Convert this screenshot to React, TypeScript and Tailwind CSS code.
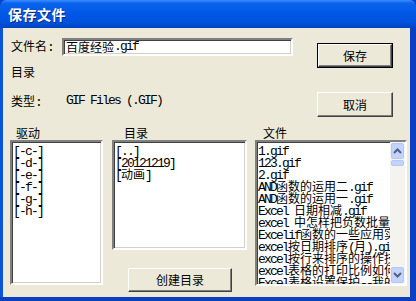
// 保存文件 dialog, Windows XP style
const CJK = "font-['Noto_Sans_CJK_SC',sans-serif]";

function Mixed({ text }: { text: string }) {
  const parts = text.split(/([\x20-\x7e]+)/).filter((p) => p !== '');
  return (
    <>
      {parts.map((p, i) =>
        /^[\x20-\x7e]+$/.test(p) ? (
          <span key={i} className="font-['Liberation_Mono',monospace] text-[13px] tracking-[-1.8px] whitespace-pre">
            {p}
          </span>
        ) : (
          <span key={i}>{p}</span>
        )
      )}
    </>
  );
}

const sunken =
  'bg-white border-2 border-t-[#808080] border-l-[#808080] border-b-white border-r-white shadow-[inset_1px_1px_0_#404040,inset_-1px_-1px_0_#D4D0C8]';

function Button({ label, isDefault = false, className = '' }: { label: string; isDefault?: boolean; className?: string }) {
  return (
    <div className={`${isDefault ? 'border border-black' : ''} ${className}`}>
      <div className="h-full flex items-center justify-center bg-[#ECE9D8] border border-t-white border-l-white border-b-[#404040] border-r-[#404040] shadow-[inset_-1px_-1px_0_#808080] text-[12px] leading-[12px] text-black">
        {label}
      </div>
    </div>
  );
}

function Scrollbar() {
  return (
    <div className="w-[15px] h-full flex flex-col bg-[#F4F3EE]">
      <div className="h-[16px] m-[1px] rounded-[2px] bg-[#C3D3FD] border border-[#B4C8F6] flex items-center justify-center">
        <svg width="9" height="6" viewBox="0 0 9 6">
          <path d="M1 5 L4.5 1.5 L8 5" fill="none" stroke="#4D6185" strokeWidth="2" />
        </svg>
      </div>
      <div className="h-[6px] mx-[1px] rounded-[2px] bg-[#C3D3FD] border border-[#B4C8F6]" />
      <div className="flex-1" />
      <div className="h-[16px] m-[1px] rounded-[2px] bg-[#C3D3FD] border border-[#B4C8F6] flex items-center justify-center">
        <svg width="9" height="6" viewBox="0 0 9 6">
          <path d="M1 1 L4.5 4.5 L8 1" fill="none" stroke="#4D6185" strokeWidth="2" />
        </svg>
      </div>
    </div>
  );
}

const drives = ['[-c-]', '[-d-]', '[-e-]', '[-f-]', '[-g-]', '[-h-]'];
const dirs = ['[..]', '[20121219]', '[动画]'];
const files = [
  '1.gif',
  '123.gif',
  '2.gif',
  'AND函数的运用二.gif',
  'AND函数的运用一.gif',
  'Excel 日期相减.gif',
  'excel 中怎样把负数批量转换',
  'Excelif函数的一些应用实例',
  'excel按日期排序(月).gif',
  'excel按行来排序的操作技巧',
  'excel表格的打印比例如何设置',
  'Excel表格设置保护--我的',
];

export default function App() {
  return (
    <div className={`w-[416px] h-[301px] flex flex-col bg-[#0A3FC2] text-black ${CJK} overflow-hidden`}>
      {/* 标题栏 */}
      <div className="h-[28px] shrink-0 rounded-t-[6px] bg-[linear-gradient(to_bottom,#3A8DFF_0%,#0A63EC_12%,#0058E6_45%,#0052DC_80%,#0043C0_100%)] flex items-center pl-[8px]">
        <span className="text-white font-bold text-[14px] leading-[14px] tracking-[0.5px] [text-shadow:1px_1px_0_#0A2A80]">
          保存文件
        </span>
      </div>

      <div className="flex-1 flex min-h-0">
        <div className="w-[3px] bg-[#0A55D8]" />
        <div className="flex-1 bg-[#ECE9D8] flex flex-col text-[12px] leading-[12px]">
          {/* 上部 */}
          <div className="h-[99px] flex shrink-0">
            <div className="w-[314px] pl-[8px] pt-[10px]">
              <div className="flex items-center h-[18px]">
                <span className="w-[51px]">
                  <Mixed text="文件名:" />
                </span>
                <div className={`w-[231px] h-[18px] ${sunken} flex items-center pl-[2px]`}>
                  <Mixed text="百度经验.gif" />
                </div>
              </div>
              <div className="mt-[10px] h-[12px]">目录</div>
              <div className="mt-[17px] h-[12px] flex">
                <span className="w-[55px]">
                  <Mixed text="类型:" />
                </span>
                <Mixed text="GIF Files (.GIF)" />
              </div>
            </div>
            <div className="pt-[15px] flex flex-col">
              <Button label="保存" isDefault className="w-[76px] h-[25px]" />
              <Button label="取消" className="w-[76px] h-[25px] mt-[24px]" />
            </div>
          </div>

          {/* 下部 */}
          <div className="flex pl-[7px]">
            <div className="w-[93px]">
              <div className="h-[13px] pl-[6px]">驱动</div>
              <div className={`h-[145px] ${sunken} pl-[1px] pt-[2px]`}>
                {drives.map((d) => (
                  <div key={d} className="h-[12px]">
                    <Mixed text={d} />
                  </div>
                ))}
              </div>
            </div>
            <div className="w-[135px] ml-[9px]">
              <div className="h-[13px] pl-[12px]">目录</div>
              <div className={`h-[110px] ${sunken} pl-[1px] pt-[2px]`}>
                {dirs.map((d) => (
                  <div key={d} className="h-[12px]">
                    <Mixed text={d} />
                  </div>
                ))}
              </div>
              <Button label="创建目录" className="w-[104px] h-[24px] mt-[18px] ml-[16px]" />
            </div>
            <div className="w-[152px] ml-[8px]">
              <div className="h-[13px] pl-[8px]">文件</div>
              <div className={`h-[146px] ${sunken} flex`}>
                <div className="flex-1 min-w-0 overflow-hidden pl-[1px] pt-[2px]">
                  {files.map((f) => (
                    <div key={f} className="h-[12px] whitespace-nowrap">
                      <Mixed text={f} />
                    </div>
                  ))}
                </div>
                <Scrollbar />
              </div>
            </div>
          </div>
        </div>
        <div className="w-[6px] bg-[#0A3FC2]" />
      </div>
      <div className="h-[4px] shrink-0 bg-[#0A3FC2]" />
    </div>
  );
}
